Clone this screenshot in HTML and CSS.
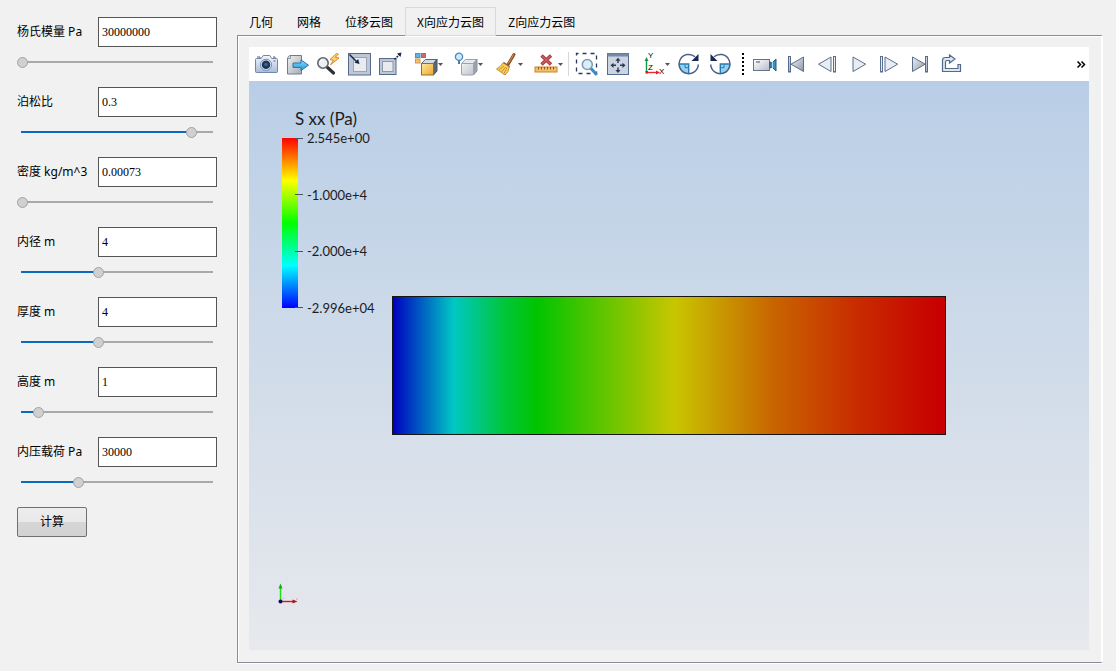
FILE: index.html
```html
<!DOCTYPE html>
<html lang="zh-CN">
<head>
<meta charset="utf-8">
<title>应力分析</title>
<link rel="stylesheet" href="styles.css">
</head>
<body>
<div class="app">
  <form class="params">
    <div class="param">
      <label for="young">杨氏模量 Pa</label>
      <input class="value" id="young" type="text" value="30000000">
      <input class="slider" type="range" min="0" max="1000" value="0" aria-label="杨氏模量" style="--fill:0">
    </div>
    <div class="param">
      <label for="poisson">泊松比</label>
      <input class="value" id="poisson" type="text" value="0.3">
      <input class="slider" type="range" min="0" max="1000" value="894" aria-label="泊松比" style="--fill:0.894">
    </div>
    <div class="param">
      <label for="density">密度 kg/m^3</label>
      <input class="value" id="density" type="text" value="0.00073">
      <input class="slider" type="range" min="0" max="1000" value="0" aria-label="密度" style="--fill:0">
    </div>
    <div class="param">
      <label for="radius">内径 m</label>
      <input class="value" id="radius" type="text" value="4">
      <input class="slider" type="range" min="0" max="1000" value="402" aria-label="内径" style="--fill:0.402">
    </div>
    <div class="param">
      <label for="thickness">厚度 m</label>
      <input class="value" id="thickness" type="text" value="4">
      <input class="slider" type="range" min="0" max="1000" value="402" aria-label="厚度" style="--fill:0.402">
    </div>
    <div class="param">
      <label for="height">高度 m</label>
      <input class="value" id="height" type="text" value="1">
      <input class="slider" type="range" min="0" max="1000" value="85" aria-label="高度" style="--fill:0.085">
    </div>
    <div class="param">
      <label for="pressure">内压载荷 Pa</label>
      <input class="value" id="pressure" type="text" value="30000">
      <input class="slider" type="range" min="0" max="1000" value="296" aria-label="内压载荷" style="--fill:0.296">
    </div>
    <button class="compute" type="button">计算</button>
  </form>

  <main class="results">
    <div class="tabs" role="tablist">
      <button class="tab" type="button" role="tab">几何</button>
      <button class="tab" type="button" role="tab">网格</button>
      <button class="tab" type="button" role="tab">位移云图</button>
      <button class="tab selected" type="button" role="tab" aria-selected="true">X向应力云图</button>
      <button class="tab" type="button" role="tab">Z向应力云图</button>
    </div>
    <section class="panel">
      <div class="toolbar">
        <button class="tool" type="button" aria-label="Screenshot">
          <svg width="25" height="24" viewBox="0 0 25 24"><defs><linearGradient id="cam" x2="0" y2="1"><stop stop-color="#f4f7fb"/><stop offset="1" stop-color="#a9bcd6"/></linearGradient></defs><path d="M3 5h3v1M19 5h2v1" stroke="#4a628c" fill="none"/><path d="M2.500 6.500h4.700l2-3h6.600l2 3h4.700q1 0 1 1v12q0 1-1 1h-20q-1 0-1-1v-12q0-1 1-1z" fill="url(#cam)" stroke="#7286a8"/><circle cx="12" cy="12.800" r="5.600" fill="#e4ebf4" stroke="#7c8eac"/><circle cx="12" cy="12.800" r="4.300" fill="#1b365f"/><circle cx="12" cy="12.500" r="1.800" fill="#416695"/><path d="M19.500 9h2" stroke="#4a628c"/></svg>
        </button>
        <button class="tool" type="button" aria-label="Export">
          <svg width="25" height="24" viewBox="0 0 25 24"><defs><linearGradient id="doc" x2="1" y2="1"><stop stop-color="#f0f1f2"/><stop offset="1" stop-color="#a6abb2"/></linearGradient><linearGradient id="arr" x2="0" y2="1"><stop stop-color="#8be0fa"/><stop offset="1" stop-color="#1f96d8"/></linearGradient></defs><path d="M4.500 3.500h12v18.500h-14v-16z" fill="url(#doc)" stroke="#6f7c8e"/><path d="M5.500 3.500v3h-3" fill="none" stroke="#8e98a5"/><path d="M8 11h8v-3.200l7.500 5.400-7.500 5.400v-3.200h-8z" fill="url(#arr)" stroke="#2873ab"/></svg>
        </button>
        <button class="tool" type="button" aria-label="Quick query">
          <svg width="25" height="24" viewBox="0 0 25 24"><path d="M11.500 15.500l6 5.500" stroke="#303030" stroke-width="3.200" stroke-linecap="round"/><circle cx="7" cy="11" r="5.200" fill="#edf0f3" stroke="#62676f" stroke-width="1.600"/><path d="M3.800 10q1-2 3-2" fill="none" stroke="#fff"/><path d="M20.500 1.500l-6.500 6 3.500.8-3 4.500 8.500-6.800-3.800-.8 3.300-3z" fill="#ffd564" stroke="#e2812e"/></svg>
        </button>
        <button class="tool" type="button" aria-label="Inner box">
          <svg width="25" height="24" viewBox="0 0 25 24"><rect x="1.500" y="1.500" width="22" height="21.500" fill="#bfc7d3" stroke="#55698f"/><rect x="6.500" y="5.500" width="13" height="14" fill="#e8ebef" stroke="#9aa6b8"/><path d="M2.500 2.500l7.500 7.500" stroke="#15294d" stroke-width="1.500"/><path d="M12.500 12l-5-1.300 3.700-3.700z" fill="#15294d"/></svg>
        </button>
        <button class="tool" type="button" aria-label="Outer box">
          <svg width="25" height="24" viewBox="0 0 25 24"><rect x="1.500" y="6.500" width="16.500" height="16" fill="#bfc7d3" stroke="#55698f"/><rect x="4.500" y="9.500" width="10.500" height="10" fill="#e8ebef" stroke="#8b98ad"/><path d="M16.500 7.500l5-5" stroke="#15294d" stroke-width="1.500" stroke-dasharray="2 1"/><path d="M23.500 .500l-1 4.500-3.500-3.500z" fill="#15294d"/></svg>
        </button>
        <button class="tool menu" type="button" aria-label="Solid cube">
          <svg width="24" height="24" viewBox="0 0 24 24"><defs><linearGradient id="gold" x2="1" y2="1"><stop stop-color="#ffe9a0"/><stop offset="1" stop-color="#eda526"/></linearGradient></defs><rect x="1.500" y="1.500" width="4.500" height="4" fill="#5db4e6" stroke="#5192b9"/><rect x="7.500" y="1.500" width="4" height="4" fill="#cf676c" stroke="#b6656b"/><rect x="1.500" y="7" width="4.500" height="4" fill="#f7c267" stroke="#d39551"/><path d="M7.500 11.500l3.800-4h11.700l-3.500 4z" fill="#d5dae1" stroke="#596579"/><path d="M19.500 11.500l3.500-4v11.500l-3.500 4z" fill="#59667a" stroke="#465163"/><rect x="7.500" y="11.500" width="12" height="11.500" fill="url(#gold)" stroke="#8f6f34"/></svg>
          <svg class="caret" width="5" height="3" viewBox="0 0 5 3"><path d="M0 0h5L2.500 3z"/></svg>
        </button>
        <button class="tool menu" type="button" aria-label="Cube light">
          <svg width="24" height="24" viewBox="0 0 24 24"><defs><linearGradient id="grey" x2="1" y2="1"><stop stop-color="#f0f1f4"/><stop offset="1" stop-color="#bfc4cc"/></linearGradient></defs><path d="M7.500 11.500l3.800-4h11.700l-3.500 4z" fill="#e7e9ed" stroke="#9ba3af"/><path d="M19.500 11.500l3.500-4v11.500l-3.500 4z" fill="#9aa2ae" stroke="#8a93a0"/><rect x="7.500" y="11.500" width="12" height="11.500" rx="1" fill="url(#grey)" stroke="#9ba3af"/><path d="M5 8v4" stroke="#54789e" stroke-width="2"/><circle cx="5" cy="4.800" r="3.600" fill="#d0eafa" stroke="#468bc0" stroke-width="1.300"/></svg>
          <svg class="caret" width="5" height="3" viewBox="0 0 5 3"><path d="M0 0h5L2.500 3z"/></svg>
        </button>
        <button class="tool menu" type="button" aria-label="Clear">
          <svg width="24" height="24" viewBox="0 0 24 24"><path d="M20 2.500l-6 10" stroke="#894b24" stroke-width="3" stroke-linecap="round"/><path d="M19.700 2.500l-5.500 9" stroke="#dd9750"/><path d="M9.500 10.500l6 4q-1 6-4.500 8.500l-8.500-6q4-2 7-6.500z" fill="#f8d15d" stroke="#c79028"/><path d="M5 18l5-4M7.500 20l4-5M10 21.500l3-6" stroke="#b8801e" stroke-width=".8"/><path d="M9.500 10.500l6 4" stroke="#a2562a" stroke-width="1.500"/></svg>
          <svg class="caret" width="5" height="3" viewBox="0 0 5 3"><path d="M0 0h5L2.500 3z"/></svg>
        </button>
        <button class="tool menu" type="button" aria-label="Remove rulers">
          <svg width="24" height="24" viewBox="0 0 24 24"><path d="M7.500 3.500l9.500 9M17 3.500l-9.500 9" stroke="#a8383f" stroke-width="3.400"/><path d="M8 4l8.500 8M16.500 4l-8.500 8" stroke="#d06066" stroke-width="1.400"/><rect x="1" y="15" width="22" height="5" fill="#f5bf63" stroke="#c58431"/><path d="M4.500 15v2.500M7.500 15v2.500M10.500 15v2.500M13.500 15v2.500M16.500 15v2.500M19.500 15v2.500" stroke="#8c5b1d"/></svg>
          <svg class="caret" width="5" height="3" viewBox="0 0 5 3"><path d="M0 0h5L2.500 3z"/></svg>
        </button>
        <span class="divider"></span>
        <button class="tool" type="button" aria-label="Zoom to box">
          <svg width="25" height="24" viewBox="0 0 25 24"><rect x="2.500" y="1.500" width="20" height="20" fill="none" stroke="#28395f" stroke-width="1.300" stroke-dasharray="4 4" stroke-dashoffset="2"/><path d="M17.500 17l4.500 5" stroke="#3b8bc4" stroke-width="3" stroke-linecap="round"/><circle cx="13.300" cy="12.500" r="5" fill="#d9f0f8" stroke="#7d9ab2" stroke-width="1.500"/></svg>
        </button>
        <button class="tool" type="button" aria-label="Reset camera">
          <svg width="25" height="24" viewBox="0 0 25 24"><rect x="2.500" y="1.500" width="21" height="21" fill="#ccd4df" stroke="#566b92"/><path d="M2.500 3h21" stroke="#7488a8" stroke-width="3"/><path d="M13 7.500v3.500M13 15.500v3.500M7.500 13.300h3.500M15 13.300h3.500" stroke="#24375c" stroke-width="1.400"/><path d="M13 5.800l2.600 3h-5.200zM13 21l2.600-3h-5.200zM5.500 13.300l3-2.600v5.200zM20.500 13.300l-3-2.600v5.200z" fill="#24375c"/></svg>
        </button>
        <button class="tool menu" type="button" aria-label="View direction">
          <svg width="24" height="24" viewBox="0 0 24 24"><path d="M5.500 20v-12" stroke="#15964d" stroke-width="1.400"/><path d="M5.500 5l2 4h-4z" fill="#15964d"/><path d="M5 20.500h11" stroke="#ee2a2a" stroke-width="1.400"/><path d="M19 20.500l-4 2v-4z" fill="#ee1c1c"/><rect x="4.500" y="19" width="2.500" height="2.500" fill="#c22"/><g class="axis-letters"><text x="7" y="6">Y</text><text x="7" y="18">Z</text><text x="18" y="22">X</text></g></svg>
          <svg class="caret" width="5" height="3" viewBox="0 0 5 3"><path d="M0 0h5L2.500 3z"/></svg>
        </button>
        <button class="tool" type="button" aria-label="Rotate clockwise">
          <svg width="25" height="24" viewBox="0 0 25 24"><path d="M12.700 12v9.500a9.500 9.500 0 0 1-9.500-9.500z" fill="#8fd3f3"/><path d="M3.500 12h9.200v9.200" fill="none" stroke="#2d79b1" stroke-width="1.400"/><path d="M9 12.500v3.200h3.500" fill="none" stroke="#2d79b1"/><path d="M19 4.800a9.600 9.600 0 1 0 3.300 7.700" fill="none" stroke="#4b5f87" stroke-width="1.500"/><path d="M22.500 2v7h-7z" fill="#182c52"/></svg>
        </button>
        <button class="tool" type="button" aria-label="Rotate counterclockwise">
          <svg width="25" height="24" viewBox="0 0 25 24"><path d="M13.300 12v9.500a9.500 9.500 0 0 0 9.500-9.500z" fill="#8fd3f3"/><path d="M22.500 12h-9.200v9.200" fill="none" stroke="#2d79b1" stroke-width="1.400"/><path d="M17 12.500v3.200h-3.500" fill="none" stroke="#2d79b1"/><path d="M7 4.800a9.600 9.600 0 1 1-3.300 7.700" fill="none" stroke="#4b5f87" stroke-width="1.500"/><path d="M3.500 2v7h7z" fill="#182c52"/></svg>
        </button>
        <span class="grip"></span>
        <button class="tool" type="button" aria-label="Record">
          <svg width="25" height="24" viewBox="0 0 25 24"><defs><linearGradient id="vid" x2="1" y2="1"><stop stop-color="#fff"/><stop offset="1" stop-color="#b6bcc6"/></linearGradient></defs><rect x="1.500" y="7.500" width="16" height="11" fill="url(#vid)" stroke="#66718a"/><path d="M4 10h4" stroke="#7b8699" stroke-width="1.500"/><path d="M18 10l2 1 4-4v12l-4-4-2 1z" fill="#3c91bd" stroke="#24577d"/><path d="M20.500 10v6" stroke="#9cd7ea"/></svg>
        </button>
        <button class="tool" type="button" aria-label="First frame">
          <svg class="play" width="25" height="24" viewBox="0 0 25 24"><defs><linearGradient id="tri" x2="1" y2="1"><stop stop-color="#eef1f4"/><stop offset="1" stop-color="#8f97a5"/></linearGradient></defs><rect x="5.500" y="4.500" width="2" height="15.500"/><path d="M20.500 5v14.500l-12.500-7.300z"/></svg>
        </button>
        <button class="tool" type="button" aria-label="Previous frame">
          <svg class="play light" width="25" height="24" viewBox="0 0 25 24"><path d="M17 5v14.500l-12.500-7.300z"/><rect x="19.500" y="4.500" width="2" height="15.500"/></svg>
        </button>
        <button class="tool" type="button" aria-label="Play">
          <svg class="play light" width="25" height="24" viewBox="0 0 25 24"><path d="M8 5v14.500l12.700-7.300z"/></svg>
        </button>
        <button class="tool" type="button" aria-label="Next frame">
          <svg class="play light" width="25" height="24" viewBox="0 0 25 24"><rect x="4.500" y="4.500" width="2" height="15.500"/><path d="M9 5v14.500l12.700-7.300z"/></svg>
        </button>
        <button class="tool" type="button" aria-label="Last frame">
          <svg class="play" width="25" height="24" viewBox="0 0 25 24"><path d="M5.500 5v14.500l12.700-7.300z"/><rect x="18.500" y="4.500" width="2" height="15.500"/></svg>
        </button>
        <button class="tool" type="button" aria-label="Loop">
          <svg width="25" height="24" viewBox="0 0 25 24"><path d="M11.500 5.500h-4q-3 0-3 3v11h18v-7h-2.500v4h-12.500v-6.500q0-1.500 1.500-1.500h2.500v2.500l5.500-4-5.500-4z" fill="#dce7f0" stroke="#526a8b" stroke-width="1.200"/></svg>
        </button>
        <button class="more" type="button" aria-label="More tools">
          <svg width="9" height="7" viewBox="0 0 9 7"><path d="M.5 .500l3 3-3 3M4.500 .500l3 3-3 3" fill="none" stroke="#000" stroke-width="1.500"/></svg>
        </button>
      </div>
      <div class="viewport">
        <div class="legend">
          <div class="legend-title">S xx (Pa)</div>
          <div class="legend-scale">
            <div class="legend-bar"></div>
            <ul class="legend-ticks">
              <li>2.545e+00</li>
              <li>-1.000e+4</li>
              <li>-2.000e+4</li>
              <li>-2.996e+04</li>
            </ul>
          </div>
        </div>
        <div class="contour"></div>
        <svg class="triad" width="24" height="24" viewBox="0 0 24 24"><path d="M4.500 19v-13" stroke="#19e019" stroke-width="1.400"/><path d="M4.500 1.500l2 5h-4z" fill="#12a812"/><path d="M5 19.500h12" stroke="#e81010" stroke-width="1.400"/><path d="M21.500 19.500l-5 2v-4z" fill="#b01414"/><path d="M6 17.500l2-2" stroke="#aab4ee"/><path d="M20 16l2 2M22 16l-2 2" stroke="#eab4b8" stroke-width=".8"/><circle cx="4.500" cy="19.500" r="2" fill="#0a0a60"/></svg>
      </div>
    </section>
  </main>
</div>
</body>
</html>
```
FILE: styles.css
```css
* {
  box-sizing: border-box;
}

body {
  margin: 0;
  background: #f1f1f1;
  color: #000;
  font: 12px/16px "Noto Sans", "Noto Sans CJK SC", sans-serif;
}

button {
  font: inherit;
  color: inherit;
}

.app {
  display: flex;
  gap: 20px;
  min-height: 100vh;
  padding: 7px 13px 7px 17px;
}

.params {
  flex: none;
  width: 200px;
  padding-top: 10px;
}

.param {
  display: grid;
  grid-template-columns: 1fr 119px;
  row-gap: 10px;
  align-items: center;
  margin-bottom: 19px;
}

.param label {
  white-space: nowrap;
}

.value {
  width: 100%;
  height: 30px;
  padding: 0 3px;
  border: 1px solid #555;
  background: #fff;
  font: 12px/16px "Liberation Serif", "Noto Sans CJK SC", serif;
}

.slider {
  grid-column: 1 / -1;
  appearance: none;
  width: 100%;
  height: 11px;
  margin: 0;
  background:
    linear-gradient(#0a6ac0, #0a6ac0) 4px 4px / calc(var(--fill) * 95%) 2px no-repeat,
    linear-gradient(#a9a9a9, #a9a9a9) 4px 4px / calc(100% - 8px) 2px no-repeat;
}

.slider::-webkit-slider-thumb {
  appearance: none;
  width: 11px;
  height: 11px;
  border: 1px solid #a3a3a3;
  border-radius: 50%;
  background: #d0d0d0;
}

.compute {
  display: block;
  width: 70px;
  height: 30px;
  padding: 0;
  border: 1px solid #707070;
  border-radius: 2px;
  background: linear-gradient(#ededed, #e9e9e9 50%, #d6d6d6 50%, #d2d2d2);
}

.results {
  flex: 1;
  min-width: 0;
  display: flex;
  flex-direction: column;
}

.tabs {
  display: flex;
  height: 29px;
}

.tab {
  padding: 0 12px;
  border: 0;
  background: none;
  font-family: "Noto Sans CJK SC", sans-serif;
  white-space: nowrap;
}

.tab.selected {
  padding: 0 11px;
  border: 1px solid #d9d9d9;
  background: #f1f1f1;
  z-index: 1;
}

.panel {
  flex: 1;
  display: flex;
  flex-direction: column;
  margin: -1px 0 1px;
  padding: 11px 12px 12px 11px;
  border: 1px solid #8c8c96;
  border-right: 2px solid #fff;
  box-shadow: inset 1px 1px #fff, 0 1px #fff;
}

.toolbar {
  display: flex;
  align-items: center;
  height: 34px;
  padding: 0 3px 0 2px;
  background: #fff;
}

.tool {
  flex: none;
  display: flex;
  align-items: center;
  padding: 0 3px;
  border: 0;
  background: none;
}

.menu {
  padding: 0 3px 0 8px;
}

.caret {
  fill: #555;
}

.divider {
  width: 1px;
  height: 24px;
  margin: 0 2px;
  background: #d8d8d8;
}

.grip {
  width: 2px;
  height: 22px;
  margin: 0 5px 0 7px;
  background: repeating-linear-gradient(#000 0 2px, #fff 2px 4px);
}

.play {
  fill: url(#tri);
  stroke: #5b6d8f;
}

.play.light {
  fill: #e8edf2;
}

.axis-letters {
  font: 8px "Liberation Sans", sans-serif;
}

.more {
  display: flex;
  margin-left: auto;
  padding: 0;
  border: 0;
  background: none;
}

.viewport {
  flex: 1;
  position: relative;
  min-height: 400px;
  background: linear-gradient(#b9cee6, #e7e9ed);
}

.legend {
  position: absolute;
  left: 33px;
  top: 28px;
  color: #1c1c1c;
  font-family: Lato, sans-serif;
}

.legend-title {
  padding-left: 13px;
  font-size: 17px;
  line-height: 20px;
}

.legend-scale {
  display: flex;
  align-items: center;
  margin-top: 1px;
}

.legend-bar {
  width: 16px;
  height: 170px;
  background: linear-gradient(#f00, #ff0 25%, #0f0 50%, #0ff 75%, #00f);
}

.legend-ticks {
  display: flex;
  flex-direction: column;
  justify-content: space-between;
  height: 186px;
  margin: 0 0 0 -3px;
  padding: 0;
  list-style: none;
  font-size: 13px;
}

.legend-ticks li {
  display: flex;
  align-items: center;
  gap: 4px;
}

.legend-ticks li::before {
  content: "";
  width: 8px;
  height: 1px;
  background: #4d5660;
}

.contour {
  position: absolute;
  left: 17%;
  top: 37.8%;
  width: 66%;
  height: 24.5%;
  border: 1px solid #151515;
  background: linear-gradient(90deg, #0000c0, #00c8c4 11%, #00c63c 20%, #00c400 26%, #c8c600 51%, #c86400 69%, #c82c00 84%, #c80000 99%);
}

.triad {
  position: absolute;
  left: 27px;
  bottom: 44px;
}
```
